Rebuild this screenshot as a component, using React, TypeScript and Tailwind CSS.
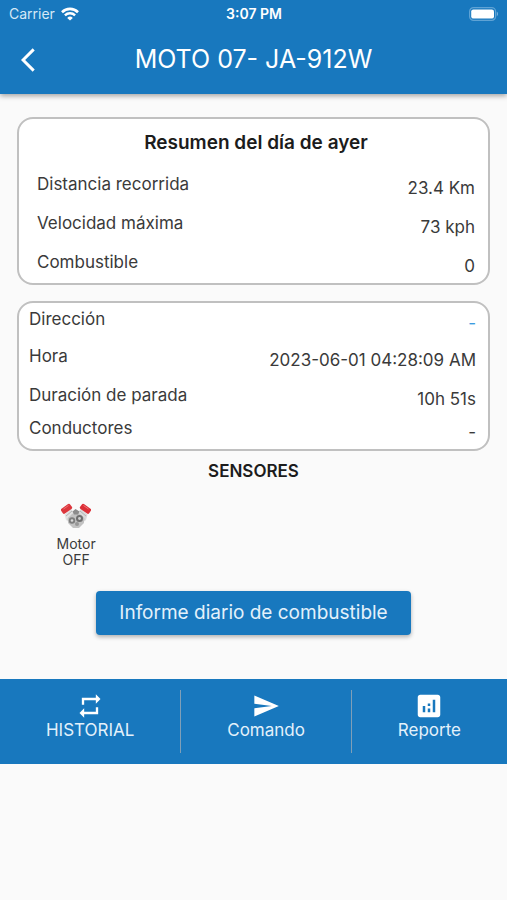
import { ReactNode } from 'react';
import {
  MdAnalytics,
  MdArrowBackIosNew,
  MdRepeat,
  MdSend,
} from 'react-icons/md';

const summary = [
  { label: 'Distancia recorrida', value: '23.4 Km' },
  { label: 'Velocidad máxima', value: '73 kph' },
  { label: 'Combustible', value: '0' },
];

const details = [
  { label: 'Dirección', value: '-', className: 'mb-[9px]', valueClassName: 'text-[#3d9be0]' },
  { label: 'Hora', value: '2023-06-01 04:28:09 AM', className: 'mb-[11px]' },
  { label: 'Duración de parada', value: '10h 51s', className: 'mb-[5px]' },
  { label: 'Conductores', value: '-' },
];

const WifiIcon = () => (
  <svg viewBox="0 0 18 14" className="h-[14px] w-[18px]" fill="none" aria-hidden="true">
    <path d="M1 5.2a11.4 11.4 0 0 1 16 0" stroke="white" strokeWidth="2.6" />
    <path d="M3.9 8.4a7.3 7.3 0 0 1 10.2 0" stroke="white" strokeWidth="2.4" />
    <path d="M9 13.6 6.2 10.9a4 4 0 0 1 5.6 0z" fill="white" />
  </svg>
);

const BatteryIcon = () => (
  <svg viewBox="0 0 30 14" className="h-[14px] w-[30px]" aria-hidden="true">
    <rect x="0.6" y="0.6" width="26" height="12.8" rx="4" fill="none" stroke="#5fa3d5" strokeWidth="1.2" />
    <rect x="2.2" y="2.4" width="22.8" height="9.2" rx="2.2" fill="white" />
    <path d="M27.8 4.8c1.6.6 1.6 3.8 0 4.4z" fill="#74b0dc" />
  </svg>
);

const MotorIcon = () => (
  <svg viewBox="0 0 30 27" className="h-[27px] w-[30px]" aria-hidden="true">
    <path d="M3.500 11.500 10 6l6 6-7 8-4-3z" fill="#e2e2e2" />
    <path d="M26.500 11.500 20 6l-6 6 7 8 4-3z" fill="#dadada" />
    <path d="m5 13 6-5M6.500 16l6-5M25 13l-6-5M23.500 16l-6-5" stroke="#b5b5b5" strokeWidth="1" />
    <path d="m7 15 4-4 4-2 4 2 4 4 0 5-5 5-6 0-5-5z" fill="#c2c2c2" />
    <path d="m11.500 8.500 3-2.500 4 2.500-1.500 3h-4z" fill="#8c8c8c" />
    <circle cx="11" cy="17.500" r="3.200" fill="#7d7d7d" />
    <circle cx="11" cy="17.500" r="1.300" fill="#d9d9d9" />
    <circle cx="18.500" cy="15.500" r="3.500" fill="#6e6e6e" />
    <circle cx="18.500" cy="15.500" r="1.400" fill="#cfcfcf" />
    <circle cx="16" cy="21" r="2" fill="#969696" />
    <rect x="0" y="2.800" width="11" height="6" rx="1.500" fill="#dc363d" transform="rotate(-35 5.500 5.800)" />
    <rect x="19" y="2.800" width="11" height="6" rx="1.500" fill="#dc2f37" transform="rotate(35 24.500 5.800)" />
    <path d="m2.500 6 5-3.500M27.500 6l-5-3.500" stroke="#f0777b" strokeWidth="0.900" />
  </svg>
);

type DataRowProps = {
  label: string;
  value: string;
  className?: string;
  valueClassName?: string;
};

const DataRow = ({ label, value, className = '', valueClassName = '' }: DataRowProps) => (
  <div className={`${className} flex items-start justify-between`}>
    <dt>{label}</dt>
    <dd className={`${valueClassName} pt-1`}>{value}</dd>
  </div>
);

const NavItem = ({ icon, label }: { icon: ReactNode; label: string }) => (
  <button type="button" className="flex flex-auto flex-col items-center pt-0.5 text-[17px] leading-5">
    {icon}
    {label}
  </button>
);

const App = () => {
  return (
    <div className="min-h-screen bg-[#fafafa] font-['Inter','Liberation_Sans',sans-serif] text-[#3a3a3a]">
      <header className="bg-[#1878be] text-white shadow-[0_2px_5px_rgba(0,0,0,0.35)]">
        <div className="grid h-7 grid-cols-3 items-center pl-[9px] pr-2 text-sm">
          <div className="flex items-center gap-1.5 text-[#d5e8f6]">
            Carrier
            <WifiIcon />
          </div>
          <div className="text-center font-semibold">3:07 PM</div>
          <div className="flex justify-end">
            <BatteryIcon />
          </div>
        </div>
        <div className="flex h-[66px] items-center px-3.5 pb-0.5">
          <button type="button" aria-label="Atrás">
            <MdArrowBackIosNew size={28} />
          </button>
          <h1 className="flex-1 pr-7 text-center text-[25px]">MOTO 07- JA-912W</h1>
        </div>
      </header>

      <main className="px-[17px] pt-[23px] text-[17px] leading-6">
        <section className="rounded-2xl border-2 border-[#c0c0c0] bg-white pb-[5px] pl-[18px] pr-[13px] pt-3">
          <h2 className="mb-[17px] text-center text-[19px] leading-6 font-semibold text-[#1c1c1c]">
            Resumen del día de ayer
          </h2>
          <dl className="flex flex-col gap-[11px]">
            {summary.map((row) => (
              <DataRow key={row.label} {...row} />
            ))}
          </dl>
        </section>

        <section className="mt-4 rounded-2xl border-2 border-[#c0c0c0] bg-white pb-[5px] pl-2.5 pr-3 pt-1">
          <dl>
            {details.map((row) => (
              <DataRow key={row.label} {...row} />
            ))}
          </dl>
        </section>

        <h2 className="mt-2 text-center font-semibold text-[#1c1c1c]">SENSORES</h2>

        <div className="mt-5 grid grid-cols-4">
          <div className="flex flex-col items-center text-center text-sm leading-4">
            <MotorIcon />
            <span className="mt-1.5">
              Motor
              <br />
              OFF
            </span>
          </div>
        </div>

        <div className="mt-[23px] flex justify-center">
          <button
            type="button"
            className="h-11 rounded bg-[#1878be] px-[23px] text-[19px] text-[#e3f1fb] shadow-[0_2px_4px_rgba(0,0,0,0.3)]"
          >
            Informe diario de combustible
          </button>
        </div>
      </main>

      <nav className="mt-11 flex h-[85px] bg-[#1878be] py-[11px] text-[#e3f1fb]">
        <NavItem icon={<MdRepeat size={28} className="text-white" />} label="HISTORIAL" />
        <div className="w-px bg-[#7f9fb8]" />
        <NavItem icon={<MdSend size={28} className="text-white" />} label="Comando" />
        <div className="w-px bg-[#7f9fb8]" />
        <NavItem icon={<MdAnalytics size={30} className="-my-px text-white" />} label="Reporte" />
      </nav>
    </div>
  );
};

export default App;
